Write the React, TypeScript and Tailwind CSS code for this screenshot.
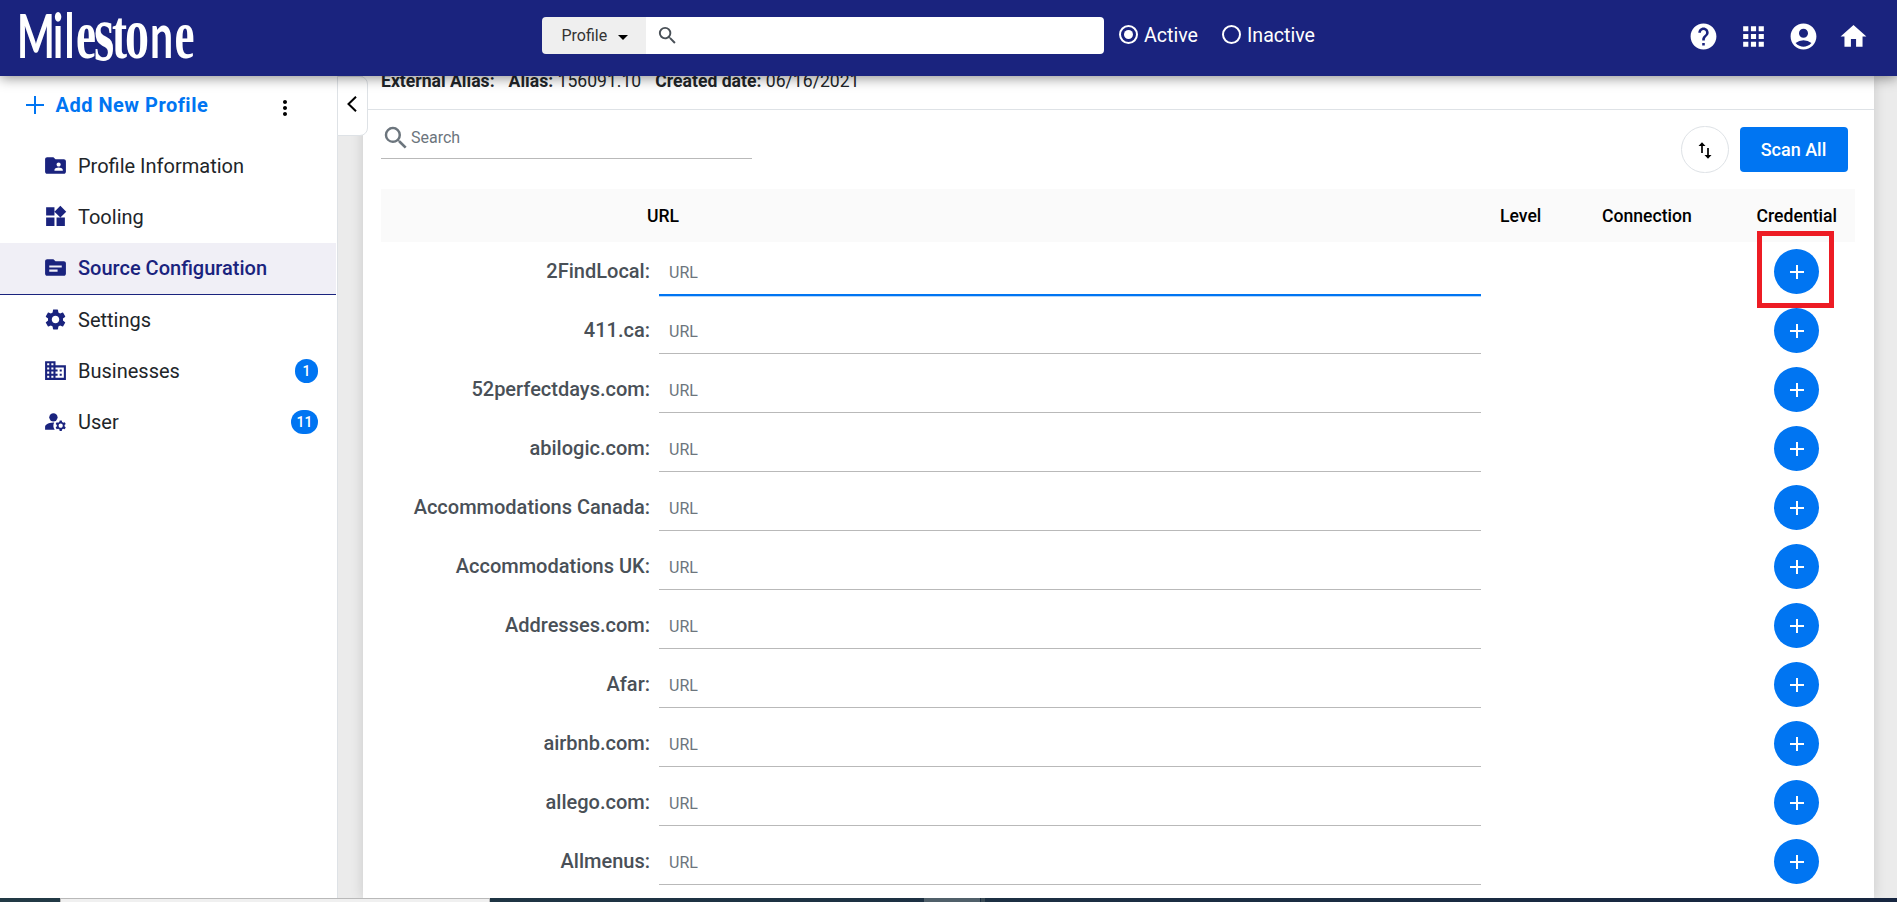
import React from "react";
import type { IconType } from "react-icons";
import {
    MdAccountCircle,
    MdAdd,
    MdApps,
    MdArrowDropDown,
    MdDomain,
    MdFolderShared,
    MdHelp,
    MdHome,
    MdManageAccounts,
    MdMoreVert,
    MdSearch,
    MdSettings,
    MdSource,
    MdWidgets,
} from "react-icons/md";

interface NavItem {
    label: string;
    icon: IconType;
    active?: boolean;
    badge?: number;
}

const NAV_ITEMS: NavItem[] = [
    { label: "Profile Information", icon: MdFolderShared },
    { label: "Tooling", icon: MdWidgets },
    { label: "Source Configuration", icon: MdSource, active: true },
    { label: "Settings", icon: MdSettings },
    { label: "Businesses", icon: MdDomain, badge: 1 },
    { label: "User", icon: MdManageAccounts, badge: 11 },
];

const SOURCES = [
    "2FindLocal",
    "411.ca",
    "52perfectdays.com",
    "abilogic.com",
    "Accommodations Canada",
    "Accommodations UK",
    "Addresses.com",
    "Afar",
    "airbnb.com",
    "allego.com",
    "Allmenus",
];

// Wordmark: plain stems in Lato, high-contrast round letters in a serif
function Logo() {
    return (
        <svg className="h-[60px] w-[180px] overflow-visible" viewBox="0 0 180 60" aria-label="Milestone">
            <text
                transform="translate(0 49.5) scale(1 1.54)"
                fontFamily="Liberation Serif, serif"
                fontWeight="700"
                fontSize="45"
                fill="#fff"
            >
                <tspan x="-2" fontFamily="Lato, sans-serif" fontSize="40">M</tspan>
                <tspan x="34" fontFamily="Lato, sans-serif" fontSize="40">i</tspan>
                <tspan x="45.5" fontFamily="Lato, sans-serif" fontSize="40">l</tspan>
                <tspan x="57">e</tspan>
                <tspan x="75" y="1.5" fontSize="52">s</tspan>
                <tspan x="93" y="0">t</tspan>
                <tspan x="106" fontSize="48">o</tspan>
                <tspan x="131" fontFamily="Lato, sans-serif" fontSize="41">n</tspan>
                <tspan x="155.5">e</tspan>
            </text>
        </svg>
    );
}

function Radio({ label, checked }: { label: string; checked?: boolean }) {
    return (
        <label className="flex items-center gap-[6px] text-[19.6px] text-white">
            <span className="flex h-[19px] w-[19px] items-center justify-center rounded-full border-2 border-white">
                {checked && <span className="h-[9px] w-[9px] rounded-full bg-white" />}
            </span>
            <span className="pt-[2px]">{label}</span>
        </label>
    );
}

function Header() {
    return (
        <header className="relative z-20 flex h-[76px] shrink-0 items-center bg-[#1a237e] shadow-[0_2px_12px_rgba(0,0,0,0.45)]">
            <div className="w-[542px] shrink-0 pl-[19px]">
                <Logo />
            </div>
            <div className="mb-[5px] flex h-[37px] w-[562px] overflow-hidden rounded">
                <div className="flex w-[104px] items-center bg-[#efefef] pl-[19.5px] text-base text-[#333]">
                    Profile
                    <MdArrowDropDown className="ml-[4px] mt-[2px] h-6 w-6 text-black" />
                </div>
                <div className="flex flex-1 items-center bg-white pl-[10px]">
                    <MdSearch className="h-[23px] w-[23px] text-[#495057]" />
                </div>
            </div>
            <div className="mb-[6px] ml-[15px] flex gap-6">
                <Radio label="Active" checked />
                <Radio label="Inactive" />
            </div>
            <div className="mb-[4px] ml-auto mr-[28px] flex gap-[19px] text-white">
                <MdHelp className="h-[31px] w-[31px]" />
                <MdApps className="h-[31px] w-[31px]" />
                <MdAccountCircle className="h-[31px] w-[31px]" />
                <MdHome className="h-[31px] w-[31px]" />
            </div>
        </header>
    );
}

function Sidebar() {
    return (
        <aside className="w-[338px] shrink-0 border-r border-[#dee2e6] bg-white pr-px">
            <div className="flex h-[65px] items-center pl-[26px] pb-[7px]">
                <svg className="h-[18px] w-[18px] text-[#0075f2]" viewBox="0 0 18 18" stroke="currentColor" strokeWidth={2}>
                    <path d="M9 0v18M0 9h18" />
                </svg>
                <span className="ml-[11.5px] text-[20px] font-bold tracking-[0.5px] text-[#0075f2]">Add New Profile</span>
                <MdMoreVert className="ml-auto mr-[39px] mt-[5px] h-6 w-6 text-black" />
            </div>
            <nav>
                {NAV_ITEMS.map(({ label, icon: Icon, active, badge }) => (
                    <div
                        key={label}
                        className={`flex items-center pb-[2px] pl-[43px] pr-[18px] text-[20px] ${
                            active
                                ? "h-[52px] border-b border-[#1a237e] bg-[#f0eff6] font-medium text-[#1a237e]"
                                : "h-[51px] text-[#212529]"
                        }`}
                    >
                        <Icon className="h-[25px] w-[25px] text-[#1a237e]" />
                        <span className="ml-[10px]">{label}</span>
                        {badge && (
                            <span className="ml-auto flex h-6 min-w-[23px] items-center justify-center rounded-full bg-[#0075f2] px-[5.5px] text-sm font-medium text-white">
                                {badge}
                            </span>
                        )}
                    </div>
                ))}
            </nav>
        </aside>
    );
}

function SourceRow({ name, first }: { name: string; first?: boolean }) {
    return (
        <div className="flex h-[59px] pt-[7px]">
            <div className="w-[269px] pt-[7px] text-right text-[20px] font-medium leading-[30px] text-[#495057]">{name}:</div>
            <div
                className={`ml-[9px] flex h-[46px] w-[822px] items-center border-b pl-[10px] pt-[3px] text-base text-[#6c757d] ${
                    first
                        ? "border-[#0075f2] shadow-[0_1px_0_0_#0075f2,0_2px_0_0_#b3d6fb]"
                        : "border-[#b9b9b9]"
                }`}
            >
                URL
            </div>
            <div className="relative ml-auto mr-[36px] h-[45px] w-[45px]">
                <button className="flex h-[45px] w-[45px] items-center justify-center rounded-full bg-[#0075f2] pl-px pt-px text-white">
                    <MdAdd className="h-6 w-6" />
                </button>
                {first && <span className="absolute -left-[17px] -top-[18px] z-10 h-[77px] w-[77px] border-[5px] border-[#ed1c24]" />}
            </div>
        </div>
    );
}

function Content() {
    return (
        <main className="ml-[25px] w-[1511px] shrink-0 bg-white shadow-[0_0_12px_rgba(0,0,0,0.15)]">
            <div className="flex h-[34px] gap-[14px] border-b border-[#dee2e6] pl-[18px] text-[17.6px] leading-[11px] text-[#212529]">
                <b className="font-bold">External Alias:</b>
                <span>
                    <b className="font-bold">Alias:</b> 156091.10
                </span>
                <span>
                    <b className="font-bold">Created date:</b> 06/16/2021
                </span>
            </div>
            <div className="flex h-[79px] pl-[18px] pr-[26px]">
                <div className="flex h-[49px] w-[371px] items-center border-b border-[#b9b9b9] pt-[7px] text-[#6c757d]">
                    <MdSearch className="h-[30px] w-[30px]" />
                    <span className="text-base">Search</span>
                </div>
                <button className="ml-auto mt-4 flex h-[47px] w-[48px] items-center justify-center rounded-full border border-[#dee2e6]">
                    <svg className="h-[18px] w-[14px]" viewBox="0 0 14 18">
                        <path d="M4 12V3M10 7v9" stroke="#000" strokeWidth={1.7} />
                        <path d="M.5 5 4 1.2 7.5 5zM6.5 14l3.5 3.8 3.5-3.8z" />
                    </svg>
                </button>
                <button className="ml-[11px] mt-[17px] h-[45px] w-[108px] rounded bg-[#0075f2] pr-px text-[18px] font-medium text-white">Scan All</button>
            </div>
            <div className="ml-[18px] mr-[19px]">
                <div className="flex h-[53px] items-center bg-[#fafafa] pt-[2px] text-[17.6px] font-medium text-black">
                    <span className="w-[564px] text-center">URL</span>
                    <span className="ml-[555px] w-[41px]">Level</span>
                    <span className="ml-[61px] w-[90px]">Connection</span>
                    <span className="ml-auto mr-[18px]">Credential</span>
                </div>
                {SOURCES.map((name, i) => (
                    <SourceRow key={name} name={name} first={i === 0} />
                ))}
            </div>
        </main>
    );
}

export default function App() {
    return (
        <div className="flex h-[902px] w-[1897px] flex-col overflow-hidden bg-[#ebebeb] font-[Roboto,sans-serif]">
            <Header />
            <div className="relative flex h-[822px] overflow-hidden">
                <Sidebar />
                <Content />
                <button className="absolute left-[337px] top-0 flex h-[60px] w-[31px] items-center rounded-r-lg border border-[#dee2e6] bg-white pl-[9px]">
                    <svg className="mb-[4px] h-[16px] w-[10px]" viewBox="0 0 10 16" fill="none" stroke="#000" strokeWidth={2}>
                        <path d="M9 .7 1.5 8 9 15.3" />
                    </svg>
                </button>
            </div>
            {/* Bottom edge strip */}
            <div className="flex h-1 shrink-0 bg-linear-to-r from-[#223a45] to-[#172640]">
                <div className="ml-[60px] w-[430px] border-x border-t border-[#b9b9b9] bg-[#f0f0f0]" />
                <div className="ml-[434px] w-[56px] bg-[#50606a]" />
                <div className="ml-px w-[4px] bg-[#3a4a55]" />
            </div>
        </div>
    );
}
